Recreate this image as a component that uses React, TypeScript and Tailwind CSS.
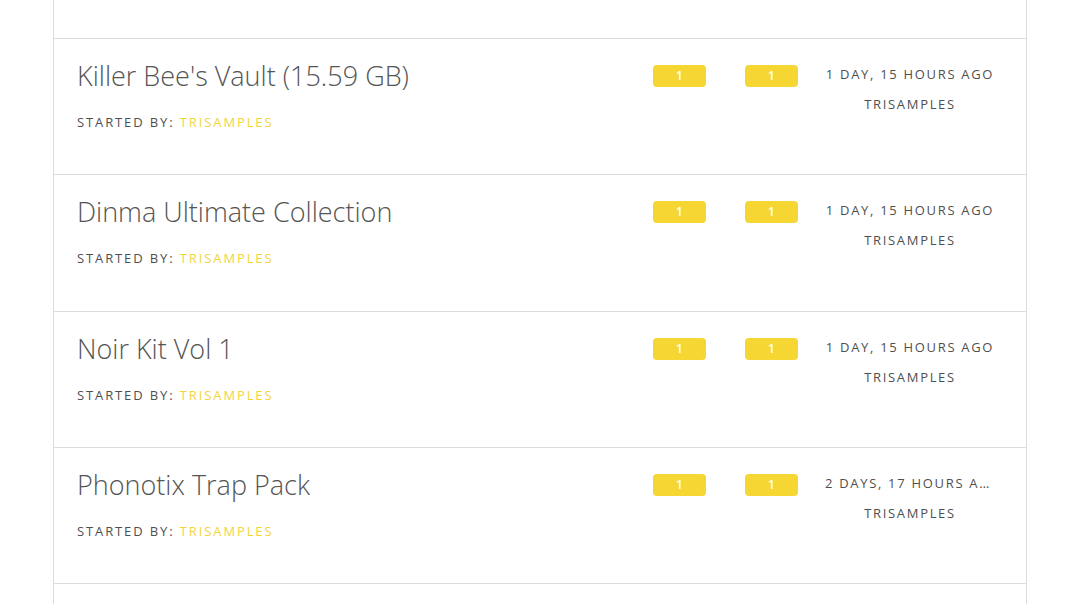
const topics = [
  { title: "Killer Bee's Vault (15.59 GB)", replies: 1, views: 1, ago: "1 DAY, 15 HOURS AGO", by: "TRISAMPLES" },
  { title: "Dinma Ultimate Collection", replies: 1, views: 1, ago: "1 DAY, 15 HOURS AGO", by: "TRISAMPLES" },
  { title: "Noir Kit Vol 1", replies: 1, views: 1, ago: "1 DAY, 15 HOURS AGO", by: "TRISAMPLES" },
  { title: "Phonotix Trap Pack", replies: 1, views: 1, ago: "2 DAYS, 17 HOURS AGO", by: "TRISAMPLES" },
];

const Badge = ({ n }: { n: number }) => (
  <span className="flex h-[22px] w-[53px] items-center justify-center rounded-[4px] bg-[#f5d633] text-[12px] font-semibold text-white">
    {n}
  </span>
);

export default function App() {
  return (
    <div
      className="h-[604px] w-full overflow-hidden bg-white text-[#4f4f4f]"
      style={{ fontFamily: '"Open Sans", "Noto Sans", sans-serif' }}
    >
      <div className="ml-[53px] w-[974px] border-x border-[#dcdcdc]">
        {/* tail of previous topic */}
        <div className="h-[39px] border-b border-[#dcdcdc]" />

        {topics.map((t) => (
          <div key={t.title} className="flex h-[135.25px] box-content border-b border-[#dcdcdc]">
            <div className="flex-1 pl-[23px] pt-[19px]">
              <h2 className="text-[27px] font-light leading-[36px] text-[#555]">{t.title}</h2>
              <p className="mt-[20px] text-[13px] leading-[16px] tracking-[0.145em]">
                STARTED BY: <span className="text-[#f2d53c]">{t.by}</span>
              </p>
            </div>
            <div className="w-[92px] pt-[26px]">
              <Badge n={t.replies} />
            </div>
            <div className="w-[70px] pt-[26px]">
              <Badge n={t.views} />
            </div>
            <div className="mr-[21px] w-[190px] pt-[27px] text-center text-[13px] leading-[16px] tracking-[0.13em]">
              <div className="truncate px-[10px]">{t.ago}</div>
              <div className="mt-[14px]">{t.by}</div>
            </div>
          </div>
        ))}
        <div className="h-[40px]" />
      </div>
    </div>
  );
}
